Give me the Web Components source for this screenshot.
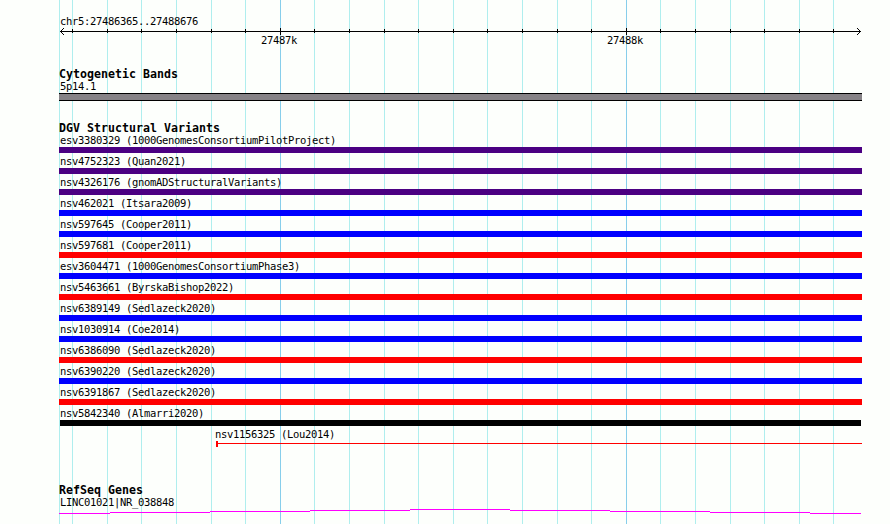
<!DOCTYPE html>
<html lang="en">
<head>
<meta charset="utf-8">
<title>chr5:27486365..27488676</title>
<style>
html, body { margin: 0; background: #fdfffc; overflow: hidden; }
</style>
</head>
<body>
<genome-browser></genome-browser>
<script>
const attach = (el, html) => { el.attachShadow({ mode: "open" }).innerHTML = html; };

customElements.define("grid-lines", class extends HTMLElement {
  connectedCallback() {
    const minor = [59,72,107,141,176,211,245,314,349,384,418,453,487,522,557,591,660,695,730,764,799,833];
    const line = (x, c) => `<rect x="${x}" y="0" width="1" height="524" fill="${c}"/>`;
    attach(this, `<style>:host{display:block;position:absolute;inset:0;z-index:-1}svg{display:block}</style>
      <svg width="890" height="524" shape-rendering="crispEdges">${minor.map(x => line(x, "#afeeee")).join("")}${[280, 626].map(x => line(x, "#87ceeb")).join("")}</svg>`);
  }
});

customElements.define("track-label", class extends HTMLElement {
  connectedCallback() {
    attach(this, `<style>:host{display:block;height:13px;padding-left:1px;font:10.5px/12px "DejaVu Sans Mono",monospace;letter-spacing:-.321px;white-space:pre;color:#000}</style><slot></slot>`);
  }
});

customElements.define("scale-axis", class extends HTMLElement {
  connectedCallback() {
    const ticks = [72,107,141,176,211,245,314,349,384,418,453,487,522,557,591,660,695,730,764,799,833];
    attach(this, `<style>:host{display:block}svg{display:block}.numbers{display:grid;grid-template-columns:346px 1fr;padding-left:201px;margin-top:-1px}</style>
      <track-label>chr5:27486365..27488676</track-label>
      <svg width="803" height="7" shape-rendering="crispEdges" viewBox="59 0 803 7">
        <rect x="60" y="3" width="801" height="1"/>
        ${ticks.map(x => `<rect x="${x}" y="1" width="1" height="4"/>`).join("")}
        ${[280, 626].map(x => `<rect x="${x}" y="0" width="1" height="7"/>`).join("")}
        ${[0,1,2,3].map(i => `<rect x="${60+i}" y="${3-i}" width="1" height="1"/><rect x="${60+i}" y="${3+i}" width="1" height="1"/><rect x="${860-i}" y="${3-i}" width="1" height="1"/><rect x="${860-i}" y="${3+i}" width="1" height="1"/>`).join("")}
      </svg>
      <div class="numbers"><track-label>27487k</track-label><track-label>27488k</track-label></div>`);
  }
});

customElements.define("track-section", class extends HTMLElement {
  connectedCallback() {
    attach(this, `<style>:host{display:block}h2{margin:0;height:13px;font:bold 11.6px/15px "DejaVu Sans Mono",monospace;letter-spacing:.017px;white-space:pre;color:#000}</style>
      <h2>${this.getAttribute("heading")}</h2><slot></slot>`);
  }
});

customElements.define("variant-row", class extends HTMLElement {
  connectedCallback() {
    attach(this, `<style>:host{display:block;height:21px}.bar{height:6px;background:${this.getAttribute("color")}}
      :host([inset]) .bar{margin:0 1px}
      :host([partial]){padding-left:155px}
      :host([partial]) .bar{margin-left:2px;background:linear-gradient(#f00,#f00) 0 0/2px 6px no-repeat,linear-gradient(#f00,#f00) 0 2px/100% 1px no-repeat}</style>
      <track-label><slot></slot></track-label><div class="bar"></div>`);
  }
});

customElements.define("cyto-band", class extends HTMLElement {
  connectedCallback() {
    attach(this, `<style>:host{display:block;box-sizing:border-box;height:8px;background:#868286;border:solid #000;border-width:1px 0}</style>`);
  }
});

customElements.define("gene-line", class extends HTMLElement {
  connectedCallback() {
    const xs = [59,110,210,310,410,510,610,710,810,861], ys = [4,3,2,1,0,1,2,3,4];
    attach(this, `<style>:host{display:block}svg{display:block}</style>
      <svg width="803" height="5" viewBox="59 0 803 5" shape-rendering="crispEdges" fill="#f0f">${ys.map((y, i) => `<rect x="${xs[i]}" y="${y}" width="${xs[i+1]-xs[i]}" height="1"/>`).join("")}</svg>`);
  }
});

customElements.define("genome-browser", class extends HTMLElement {
  connectedCallback() {
    const p = "#4b0082", b = "#00f", r = "#f00";
    const rows = [
      ["esv3380329 (1000GenomesConsortiumPilotProject)", p], ["nsv4752323 (Quan2021)", p],
      ["nsv4326176 (gnomADStructuralVariants)", p], ["nsv462021 (Itsara2009)", b],
      ["nsv597645 (Cooper2011)", b], ["nsv597681 (Cooper2011)", r],
      ["esv3604471 (1000GenomesConsortiumPhase3)", b], ["nsv5463661 (ByrskaBishop2022)", r],
      ["nsv6389149 (Sedlazeck2020)", b], ["nsv1030914 (Coe2014)", b],
      ["nsv6386090 (Sedlazeck2020)", r], ["nsv6390220 (Sedlazeck2020)", b],
      ["nsv6391867 (Sedlazeck2020)", r], ["nsv5842340 (Almarri2020)", "#000", "inset"],
      ["nsv1156325 (Lou2014)", r, "partial"]];
    attach(this, `<style>
      :host{display:block;position:relative;z-index:0;box-sizing:border-box;width:890px;height:524px;padding:15px 28px 0 59px;overflow:hidden}
      .cyto,.variants{margin-top:20px}.genes{margin-top:34px}</style>
      <grid-lines></grid-lines>
      <scale-axis></scale-axis>
      <track-section class="cyto" heading="Cytogenetic Bands"><track-label>5p14.1</track-label><cyto-band></cyto-band></track-section>
      <track-section class="variants" heading="DGV Structural Variants">${rows.map(([t, c, a]) => `<variant-row color="${c}" ${a || ""}>${t}</variant-row>`).join("")}</track-section>
      <track-section class="genes" heading="RefSeq Genes"><track-label>LINC01021|NR_038848</track-label><gene-line></gene-line></track-section>`);
  }
});
</script>
</body>
</html>
